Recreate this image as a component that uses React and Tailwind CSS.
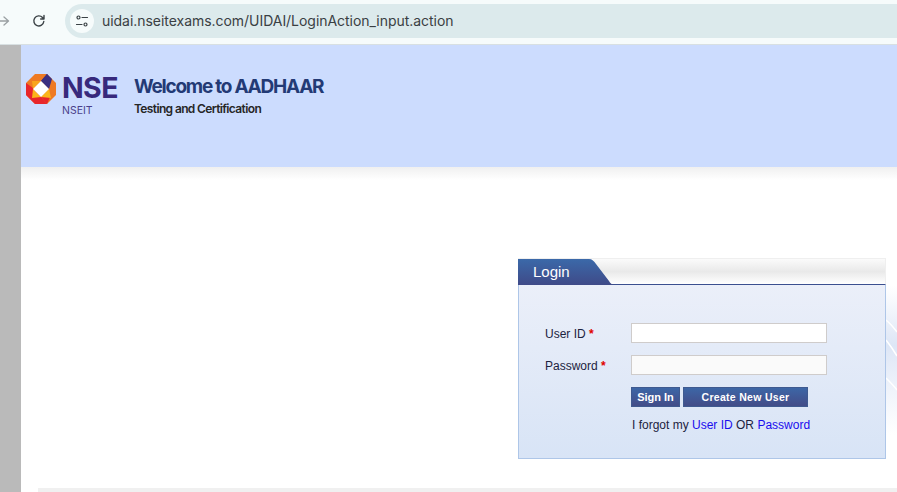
const sans = "font-['Liberation_Sans',Arial,sans-serif]";

function Logo() {
  return (
    <svg width="32" height="32" viewBox="0 0 32 32" className="shrink-0">
      <polygon points="10,1 22,1 31,10 31,22 22,31 10,31 1,22 1,10" fill="#ee7a23" />
      <polygon points="1,10 8,15 16,24 22,31 10,31 1,22" fill="#e8262c" />
      <polygon points="16,24 25,24 22,31" fill="#e8262c" />
      <polygon points="16,8 24,16 24,4 22,1" fill="#3b2f80" />
      <polygon points="22,1 27,6 24,16 16,8" fill="#3b2f80" />
      <polygon points="24,16 26,25 16,24" fill="#fbb61a" />
      <polygon points="8,16 16,24 7,25" fill="#fbb61a" />
      <polygon points="16,8 8,16 7,8" fill="#f9a51c" />
      <polygon points="16,8 24,16 16,24 8,16" fill="#ffffff" />
    </svg>
  );
}

function Field({ label, bg }) {
  return (
    <div className="flex items-center h-[20px]">
      <div className="w-[86px] mt-[2px] text-[12px] text-[#1c2340]">
        {label} <span className="text-[#e00000] font-bold">*</span>
      </div>
      <div className={`w-[196px] h-[20px] border-[1.5px] border-[#cfcccb] ${bg}`} />
    </div>
  );
}

export default function App() {
  return (
    <div className={`w-[897px] h-[492px] overflow-hidden flex flex-col bg-white ${sans}`}>
      <div className="h-[45px] shrink-0 bg-[#f6fbfb] border-b border-[#d8e0e2] flex items-start pt-[4px]">
        <div className="h-[34px] flex items-center shrink-0">
          <svg width="10" height="12" viewBox="0 0 10 12" className="shrink-0" fill="none" stroke="#9aa0a3" strokeWidth="1.3" strokeLinecap="round" strokeLinejoin="round">
            <path d="M0 6h8M4 2l4.500 4-4.500 4" />
          </svg>
          <svg width="14" height="14" viewBox="0 0 14 14" className="ml-[22px] shrink-0" fill="none" stroke="#3a4145" strokeWidth="1.4" strokeLinecap="round" strokeLinejoin="round">
            <path d="M11.800 7.500a5 5 0 1 1-1.300-4L12 5V1.500M12 5H8.700" />
          </svg>
        </div>
        <div className="ml-[19px] flex-1 h-[34px] mr-[-30px] rounded-full bg-[#dceaec] flex items-center pl-[5px]">
          <div className="w-[24px] h-[24px] rounded-full bg-[#f6fbfb] flex items-center justify-center shrink-0">
            <svg width="14" height="14" viewBox="0 0 14 14" fill="none" stroke="#3a4145" strokeWidth="1.2" strokeLinecap="round">
              <circle cx="3.500" cy="3.500" r="1.500" />
              <path d="M7 3.500h5.500M1.500 10.500H7" />
              <circle cx="10.500" cy="10.500" r="1.500" />
            </svg>
          </div>
          <span className="ml-[8px] mb-[2px] font-['Inter',sans-serif] text-[14px] tracking-[-0.04px] text-[#3a4043] whitespace-nowrap">
            uidai.nseitexams.com/UIDAI/LoginAction_input.action
          </span>
        </div>
      </div>

      <div className="flex-1 flex min-h-0">
        <div className="w-[21px] shrink-0 bg-[#bababa]" />
        <div className="flex-1 flex flex-col min-w-0 relative">
          <div className="h-[122px] shrink-0 bg-[#ccdcfe] flex items-start pl-[4px] pt-[28px]">
            <Logo />
            <div className="ml-[5px] mt-[3px] w-[57px] flex flex-col text-[#37297c]">
              <span className="font-['Inter',sans-serif] font-bold text-[28.500px] leading-[24px] tracking-[-0.6px]">NSE</span>
              <span className="font-['Inter',sans-serif] text-[10.500px] leading-[11px] mt-[5px] text-[#4a3f8a]">NSEIT</span>
            </div>
            <div className="ml-[15px] flex flex-col mt-[2px] min-w-0">
              <span className="font-['Inter',sans-serif] font-bold text-[19px] leading-[24px] tracking-[-1.25px] text-[#233a75] whitespace-nowrap">Welcome to AADHAAR</span>
              <span className="font-['Inter',sans-serif] font-semibold text-[12px] leading-[14px] tracking-[-0.63px] mt-[3px] text-[#262626] whitespace-nowrap">Testing and Certification</span>
            </div>
          </div>
          <div className="h-[13px] shrink-0 bg-gradient-to-b from-[#f0f0f0] to-white" />

          <div className="flex justify-end pt-[78px] pr-[11px]">
            <div className="w-[368px] h-[201px] flex flex-col">
              <div className="h-[27px] shrink-0 flex border-b-[1.5px] border-[#3b4f8f] bg-gradient-to-b from-[#fbfbfb] via-[#e9e9e9] to-white border-t border-r border-t-[#efefef] border-r-[#efefef]">
                <div className="relative w-[97px] h-full">
                  <svg className="absolute inset-0" width="97" height="26" viewBox="0 0 97 26" preserveAspectRatio="none">
                    <defs>
                      <linearGradient id="tab" x1="0" y1="0" x2="0" y2="1">
                        <stop offset="0" stopColor="#3b69a9" />
                        <stop offset="1" stopColor="#3f4a88" />
                      </linearGradient>
                    </defs>
                    <path d="M0 0H71C74 0 76 2 78 5L91 22C92 24 94 26 97 26H0Z" fill="url(#tab)" />
                  </svg>
                  <span className="absolute left-[15px] top-[4px] text-[15px] leading-[18px] text-white">Login</span>
                </div>
              </div>
              <div className="flex-1 border border-t-0 border-[#aec6e8] bg-gradient-to-b from-[#ebeff9] to-[#d8e4f6] pl-[26px] pt-[38px]">
                <div className="flex flex-col gap-[12px]">
                  <Field label="User ID" bg="bg-white" />
                  <Field label="Password" bg="bg-[#fafafa]" />
                </div>
                <div className="ml-[86px] mt-[12px] flex gap-[3px]">
                  <div className="w-[49px] h-[20px] border border-[#3f5a90] bg-gradient-to-b from-[#3c66a6] to-[#424c88] text-white text-[11px] font-bold flex items-center justify-center">Sign In</div>
                  <div className="w-[125px] h-[20px] pt-[1px] border border-[#3f5a90] bg-gradient-to-b from-[#3c66a6] to-[#424c88] text-white text-[10.500px] font-bold tracking-[0.3px] flex items-center justify-center">Create New User</div>
                </div>
                <div className="ml-[87px] mt-[11px] text-[12px] leading-[14px] text-[#1c2340]">
                  I forgot my <span className="text-[#1a0dee]">User ID</span> OR <span className="text-[#1a0dee]">Password</span>
                </div>
              </div>
            </div>
          </div>

          <svg className="absolute left-[865px] top-[240px]" width="11" height="150" viewBox="0 0 11 150" fill="none">
            <defs>
              <linearGradient id="swoosh" x1="0" y1="0" x2="0" y2="1">
                <stop offset="0" stopColor="#e2e9f7" stopOpacity="0" />
                <stop offset="0.4" stopColor="#dde6f6" />
                <stop offset="1" stopColor="#e2e9f7" stopOpacity="0" />
              </linearGradient>
            </defs>
            <rect width="11" height="150" fill="url(#swoosh)" />
            <path d="M0 35C4 38 8 43 11 47M0 55C4 60 8 66 11 71M0 93C4 97 8 101 11 105" stroke="#ffffff" strokeWidth="1.500" />
          </svg>

          <div className="absolute left-[17px] right-0 top-[443px] h-[4px] bg-[#f0f0f0]" />
        </div>
      </div>
    </div>
  );
}
